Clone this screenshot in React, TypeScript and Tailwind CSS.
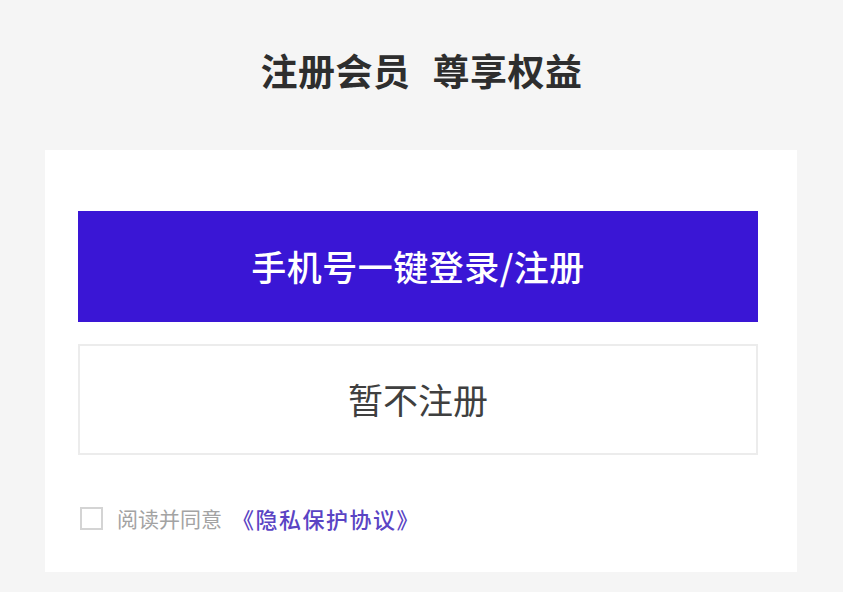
const App = () => {
  return (
    <div
      className="w-[843px] h-[592px] bg-[#f5f5f5] overflow-hidden"
      style={{ fontFamily: '"Noto Sans CJK SC", "Noto Sans", sans-serif' }}
    >
      <h1 className="h-[150px] pb-[8px] flex items-center justify-center gap-[22px] text-[37px] font-bold text-[#2e2e2e] tracking-[0.5px]">
        <span>注册会员</span>
        <span>尊享权益</span>
      </h1>
      <div className="ml-[45px] w-[752px] h-[422px] bg-white pl-[33px] pr-[39px] pt-[61px]">
        <button
          type="button"
          className="w-full h-[111px] bg-[#3a16d5] text-white text-[35px] font-medium flex items-center justify-center tracking-[0.5px]"
        >
          手机号一键登录/注册
        </button>
        <button
          type="button"
          className="mt-[22px] w-full h-[111px] bg-white border-2 border-[#ececec] text-[#3f3f3f] text-[35px] flex items-center justify-center"
        >
          暂不注册
        </button>
        <div className="mt-[47px] flex items-center">
          <span className="ml-[2px] w-[23px] h-[23px] border-2 border-[#d4d4d4] bg-white" />
          <span className="ml-[14px] text-[21px] text-[#a3a3a3]">阅读并同意</span>
          <span className="ml-[10px] text-[22px] font-medium text-[#5a44c4] tracking-[1.5px]">《隐私保护协议》</span>
        </div>
      </div>
    </div>
  );
};

export default App;
